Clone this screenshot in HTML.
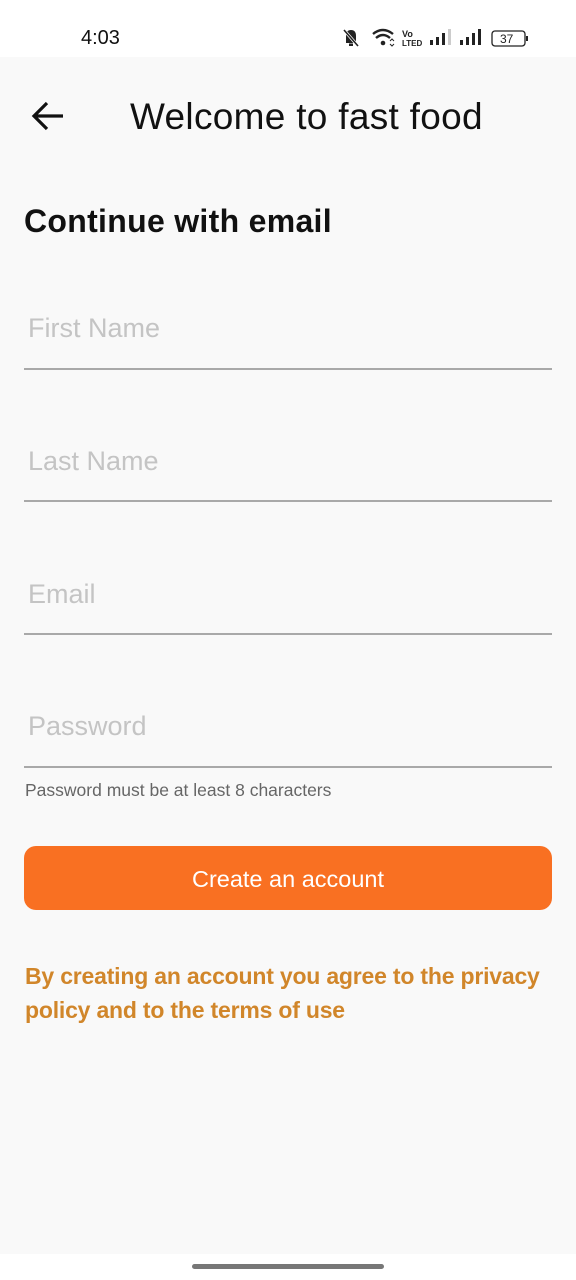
<!DOCTYPE html>
<html><head><meta charset="utf-8"><style>
*{margin:0;padding:0;box-sizing:border-box}
body{width:576px;height:1280px;position:relative;background:#fff;font-family:"Liberation Sans",sans-serif;overflow:hidden}
.main{position:absolute;left:0;top:57px;width:576px;height:1197px;background:#f9f9f9}
.abs{position:absolute;white-space:nowrap}
.line{position:absolute;left:24px;width:528px;height:2px;background:#a9a9a9}
.ph{position:absolute;left:28px;font-size:27px;color:#c4c4c4}
</style></head><body>
<div class="abs" style="left:81px;top:27px;font-size:20px;color:#111">4:03</div>
<svg class="abs" style="left:340px;top:26px" width="200" height="24" viewBox="0 0 200 24">
<path d="M6 17 L6 10 Q6 4 11 4 Q16 4 16 10 L16 17 Z" fill="#222"/><rect x="9" y="17.5" width="4" height="2.5" fill="#222"/><line x1="4" y1="4" x2="18" y2="20" stroke="#fff" stroke-width="3"/><line x1="4" y1="4" x2="18" y2="20" stroke="#222" stroke-width="1.6"/>
<path d="M33 8 Q43 0 53 8" stroke="#222" stroke-width="2.4" fill="none"/><path d="M36 12 Q43 6 50 12" stroke="#222" stroke-width="2.4" fill="none"/><circle cx="43" cy="17" r="2.3" fill="#222"/><path d="M50 15l2-2 2 2M50 18l2 2 2-2" stroke="#222" stroke-width="1" fill="none"/>
<text x="62" y="11" font-size="9" font-weight="bold" fill="#222" font-family="Liberation Sans">Vo</text><text x="62" y="20" font-size="8" font-weight="bold" fill="#222" font-family="Liberation Sans">LTED</text>
<rect x="90" y="14" width="3" height="5" fill="#222"/><rect x="96" y="11" width="3" height="8" fill="#222"/><rect x="102" y="7" width="3" height="12" fill="#222"/><rect x="108" y="3" width="3" height="16" fill="#ccc"/>
<rect x="120" y="14" width="3" height="5" fill="#222"/><rect x="126" y="11" width="3" height="8" fill="#222"/><rect x="132" y="7" width="3" height="12" fill="#222"/><rect x="138" y="3" width="3" height="16" fill="#222"/>
<rect x="152" y="5" width="33" height="15" rx="3" fill="none" stroke="#222" stroke-width="1.3"/><rect x="186" y="10" width="2" height="5" fill="#222"/><text x="160" y="17" font-size="12" fill="#222" font-family="Liberation Sans">37</text>
</svg>
<div class="main">
<svg class="abs" style="left:30px;top:43px" width="36" height="32" viewBox="0 0 36 32"><path d="M33 16H4M17 3L4 16l13 13" stroke="#111" stroke-width="3.2" fill="none"/></svg>
<div class="abs" style="left:130px;top:39px;font-size:37px;color:#111;letter-spacing:0.3px">Welcome to fast food</div>
<div class="abs" style="left:24px;top:146px;font-size:32px;font-weight:bold;color:#111;letter-spacing:0.3px">Continue with email</div>
<div class="ph" style="top:256px">First Name</div><div class="line" style="top:311px"></div>
<div class="ph" style="top:389px">Last Name</div><div class="line" style="top:443px"></div>
<div class="ph" style="top:522px">Email</div><div class="line" style="top:576px"></div>
<div class="ph" style="top:654px">Password</div><div class="line" style="top:709px"></div>
<div class="abs" style="left:25px;top:723px;font-size:17.5px;color:#666">Password must be at least 8 characters</div>
<div class="abs" style="left:24px;top:789px;width:528px;height:64px;border-radius:12px;background:#f97022;color:#fff;font-size:23.5px;text-align:center;line-height:66px">Create an account</div>
<div class="abs" style="left:25px;top:902px;font-size:23px;font-weight:bold;color:#d1862a;line-height:34px;letter-spacing:-0.2px">By creating an account you agree to the privacy<br>policy and to the terms of use</div>
</div>
<div class="abs" style="left:192px;top:1264px;width:192px;height:5px;border-radius:3px;background:#777"></div>
</body></html>
